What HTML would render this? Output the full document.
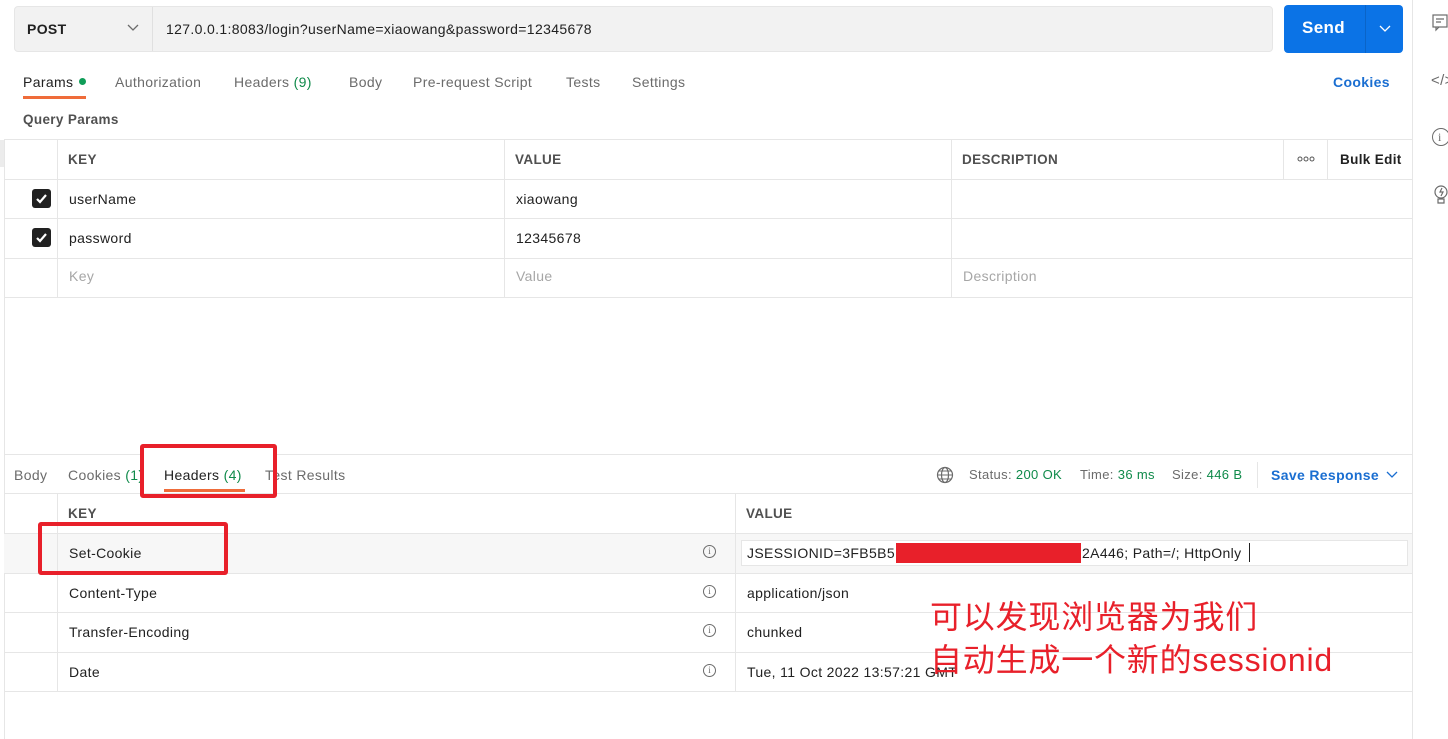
<!DOCTYPE html>
<html><head><meta charset="utf-8"><style>
*{box-sizing:border-box;margin:0;padding:0}
body{width:1448px;height:739px;background:#fff;font-family:"Liberation Sans",sans-serif;font-size:14px;color:#212121;position:relative;overflow:hidden;letter-spacing:0.35px}
.a{position:absolute;white-space:nowrap}
.hl{position:absolute;height:1px;background:#e6e6e6}
.vl{position:absolute;width:1px;background:#e6e6e6}
.g{color:#6b6b6b}
.gr{color:#0f8a4a}
.ph{color:#a6a6a6}
.b{font-weight:bold;color:#505050;font-size:13.5px}
.cb{position:absolute;left:32px;width:19px;height:19px;background:#212121;border-radius:3px}
.info{position:absolute;left:703px;width:13px;height:13px;border:1px solid #6b6b6b;border-radius:50%;font-size:9px;color:#6b6b6b;text-align:center;line-height:11px;font-family:"Liberation Serif",serif;letter-spacing:0}
.rb{position:absolute;border:4px solid #e8202a;border-radius:3px}
</style></head><body>
<div class="a" style="left:14px;top:6px;width:1259px;height:46px;background:#f2f2f2;border:1px solid #e6e6e6;border-radius:4px"></div>
<div class="vl" style="left:152px;top:7px;height:44px;background:#e0e0e0"></div>
<div class="a" style="left:27px;top:21px;font-weight:bold;font-size:14px">POST</div>
<svg class="a" style="left:127px;top:24px" width="12" height="8"><path d="M1 1l5 5 5-5" stroke="#6b6b6b" fill="none" stroke-width="1.3"/></svg>
<div class="a" style="left:166px;top:21px">127.0.0.1:8083/login?userName=xiaowang&amp;password=12345678</div>
<div class="a" style="left:1284px;top:5px;width:119px;height:48px;background:#0b73e6;border-radius:4px"></div>
<div class="vl" style="left:1365px;top:5px;height:48px;background:#0a64c8"></div>
<div class="a" style="left:1302px;top:18px;color:#fff;font-weight:bold;font-size:17px">Send</div>
<svg class="a" style="left:1379px;top:25px" width="12" height="8"><path d="M1 1l5 5 5-5" stroke="#fff" fill="none" stroke-width="1.3"/></svg>
<div class="vl" style="left:1412px;top:0;height:739px"></div>
<svg class="a" style="left:1432px;top:14px" width="16" height="18"><rect x="1" y="1" width="14" height="12" fill="none" stroke="#6b6b6b" stroke-width="1.2"/><path d="M4 5h8M4 8h5M4 13v3l3-3" stroke="#6b6b6b" fill="none" stroke-width="1.2"/></svg>
<div class="a g" style="left:1431px;top:72px;font-size:15px">&lt;/&gt;</div>
<div class="a" style="left:1432px;top:128px;width:18px;height:18px;border:1.3px solid #6b6b6b;border-radius:50%;font-size:12px;color:#6b6b6b;padding-left:5px;line-height:16px;font-family:'Liberation Serif',serif">i</div>
<svg class="a" style="left:1432px;top:184px" width="16" height="22"><circle cx="9" cy="8" r="6" fill="none" stroke="#6b6b6b" stroke-width="1.2"/><path d="M6 15h6v4H6zM10 4l-2 4h3l-2 4" stroke="#6b6b6b" fill="none" stroke-width="1.2"/></svg>
<div class="a" style="left:23px;top:74px">Params</div>
<div class="a" style="left:79px;top:78px;width:7px;height:7px;background:#0f9d58;border-radius:50%"></div>
<div class="a" style="left:23px;top:96px;width:63px;height:3px;background:#ef6c3a"></div>
<div class="a g" style="left:115px;top:74px">Authorization</div>
<div class="a g" style="left:234px;top:74px">Headers <span class="gr">(9)</span></div>
<div class="a g" style="left:349px;top:74px">Body</div>
<div class="a g" style="left:413px;top:74px">Pre-request Script</div>
<div class="a g" style="left:566px;top:74px">Tests</div>
<div class="a g" style="left:632px;top:74px">Settings</div>
<div class="a" style="left:1333px;top:74px;color:#1a6ed1;font-weight:bold">Cookies</div>
<div class="a b" style="left:23px;top:112px">Query Params</div>
<div class="vl" style="left:4px;top:139px;height:600px"></div>
<div class="a" style="left:0;top:140px;width:4px;height:27px;background:#ececec"></div>
<div class="hl" style="left:4px;top:139px;width:1408px"></div>
<div class="hl" style="left:4px;top:179px;width:1408px"></div>
<div class="hl" style="left:4px;top:218px;width:1408px"></div>
<div class="hl" style="left:4px;top:258px;width:1408px"></div>
<div class="hl" style="left:4px;top:297px;width:1408px"></div>
<div class="vl" style="left:57px;top:139px;height:158px"></div>
<div class="vl" style="left:504px;top:139px;height:158px"></div>
<div class="vl" style="left:951px;top:139px;height:158px"></div>
<div class="vl" style="left:1283px;top:139px;height:40px"></div>
<div class="vl" style="left:1327px;top:139px;height:40px"></div>
<div class="a b" style="left:68px;top:152px">KEY</div>
<div class="a b" style="left:515px;top:152px">VALUE</div>
<div class="a b" style="left:962px;top:152px">DESCRIPTION</div>
<svg class="a" style="left:1297px;top:156px" width="18" height="6"><circle cx="3" cy="3" r="2" fill="none" stroke="#555"/><circle cx="9" cy="3" r="2" fill="none" stroke="#555"/><circle cx="15" cy="3" r="2" fill="none" stroke="#555"/></svg>
<div class="a" style="left:1340px;top:152px;font-weight:bold;font-size:13.5px">Bulk Edit</div>
<div class="cb" style="top:189px"><svg width="19" height="19"><path d="M5 10l3 3 6-7" stroke="#fff" stroke-width="2.2" fill="none"/></svg></div>
<div class="cb" style="top:228px"><svg width="19" height="19"><path d="M5 10l3 3 6-7" stroke="#fff" stroke-width="2.2" fill="none"/></svg></div>
<div class="a" style="left:69px;top:191px">userName</div>
<div class="a" style="left:516px;top:191px">xiaowang</div>
<div class="a" style="left:69px;top:230px">password</div>
<div class="a" style="left:516px;top:230px">12345678</div>
<div class="a ph" style="left:69px;top:268px">Key</div>
<div class="a ph" style="left:516px;top:268px">Value</div>
<div class="a ph" style="left:963px;top:268px">Description</div>
<div class="hl" style="left:4px;top:454px;width:1408px"></div>
<div class="a g" style="left:14px;top:467px">Body</div>
<div class="a g" style="left:68px;top:467px">Cookies <span class="gr">(1)</span></div>
<div class="a" style="left:144px;top:450px;width:129px;height:44px;background:#fff"></div>
<div class="a" style="left:164px;top:467px">Headers <span class="gr">(4)</span></div>
<div class="a g" style="left:265px;top:467px">Test Results</div>
<div class="a" style="left:164px;top:489px;width:81px;height:3px;background:#ef6c3a"></div>
<svg class="a" style="left:936px;top:466px" width="18" height="18"><circle cx="9" cy="9" r="7.5" fill="none" stroke="#6b6b6b" stroke-width="1.2"/><ellipse cx="9" cy="9" rx="3.5" ry="7.5" fill="none" stroke="#6b6b6b" stroke-width="1.2"/><path d="M1.5 9h15M3 5h12M3 13h12" stroke="#6b6b6b" stroke-width="1.1"/></svg>
<div class="a g" style="left:969px;top:467px;font-size:13px">Status: <span class="gr">200 OK</span></div>
<div class="a g" style="left:1080px;top:467px;font-size:13px">Time: <span class="gr">36 ms</span></div>
<div class="a g" style="left:1172px;top:467px;font-size:13px">Size: <span class="gr">446 B</span></div>
<div class="vl" style="left:1257px;top:462px;height:26px"></div>
<div class="a" style="left:1271px;top:467px;color:#1a6ed1;font-weight:bold">Save Response</div>
<svg class="a" style="left:1386px;top:471px" width="12" height="8"><path d="M1 1l5 5 5-5" stroke="#1a6ed1" fill="none" stroke-width="1.3"/></svg>
<div class="hl" style="left:4px;top:493px;width:1408px"></div>
<div class="a" style="left:4px;top:534px;width:1408px;height:39px;background:#f7f7f7"></div>
<div class="hl" style="left:4px;top:533px;width:1408px"></div>
<div class="hl" style="left:4px;top:573px;width:1408px"></div>
<div class="hl" style="left:4px;top:612px;width:1408px"></div>
<div class="hl" style="left:4px;top:652px;width:1408px"></div>
<div class="hl" style="left:4px;top:691px;width:1408px"></div>
<div class="vl" style="left:57px;top:493px;height:198px"></div>
<div class="vl" style="left:735px;top:493px;height:198px"></div>
<div class="a b" style="left:68px;top:506px">KEY</div>
<div class="a b" style="left:746px;top:506px">VALUE</div>
<div class="a" style="left:69px;top:545px">Set-Cookie</div>
<div class="a" style="left:69px;top:585px">Content-Type</div>
<div class="a" style="left:69px;top:624px">Transfer-Encoding</div>
<div class="a" style="left:69px;top:664px">Date</div>
<div class="info" style="top:545px">i</div>
<div class="info" style="top:585px">i</div>
<div class="info" style="top:624px">i</div>
<div class="info" style="top:664px">i</div>
<div class="a" style="left:741px;top:540px;width:667px;height:26px;background:#fff;border:1px solid #e6e6e6"></div>
<div class="a" style="left:747px;top:545px">JSESSIONID=3FB5B5D</div>
<div class="a" style="left:896px;top:543px;width:185px;height:20px;background:#e8202a"></div>
<div class="a" style="left:1082px;top:545px">2A446; Path=/; HttpOnly</div>
<div class="a" style="left:1249px;top:543px;width:1px;height:19px;background:#212121"></div>
<div class="a" style="left:747px;top:585px">application/json</div>
<div class="a" style="left:747px;top:624px">chunked</div>
<div class="a" style="left:747px;top:664px">Tue, 11 Oct 2022 13:57:21 GMT</div>
<div class="rb" style="left:140px;top:444px;width:137px;height:54px"></div>
<div class="rb" style="left:38px;top:522px;width:190px;height:53px"></div>
<div class="a" style="left:930px;top:596px;color:#e8202a;font-size:32px;line-height:43px;letter-spacing:0.8px;font-family:'Liberation Sans','Noto Sans CJK SC',sans-serif">可以发现浏览器为我们<br>自动生成一个新的sessionid</div>
</body></html>
